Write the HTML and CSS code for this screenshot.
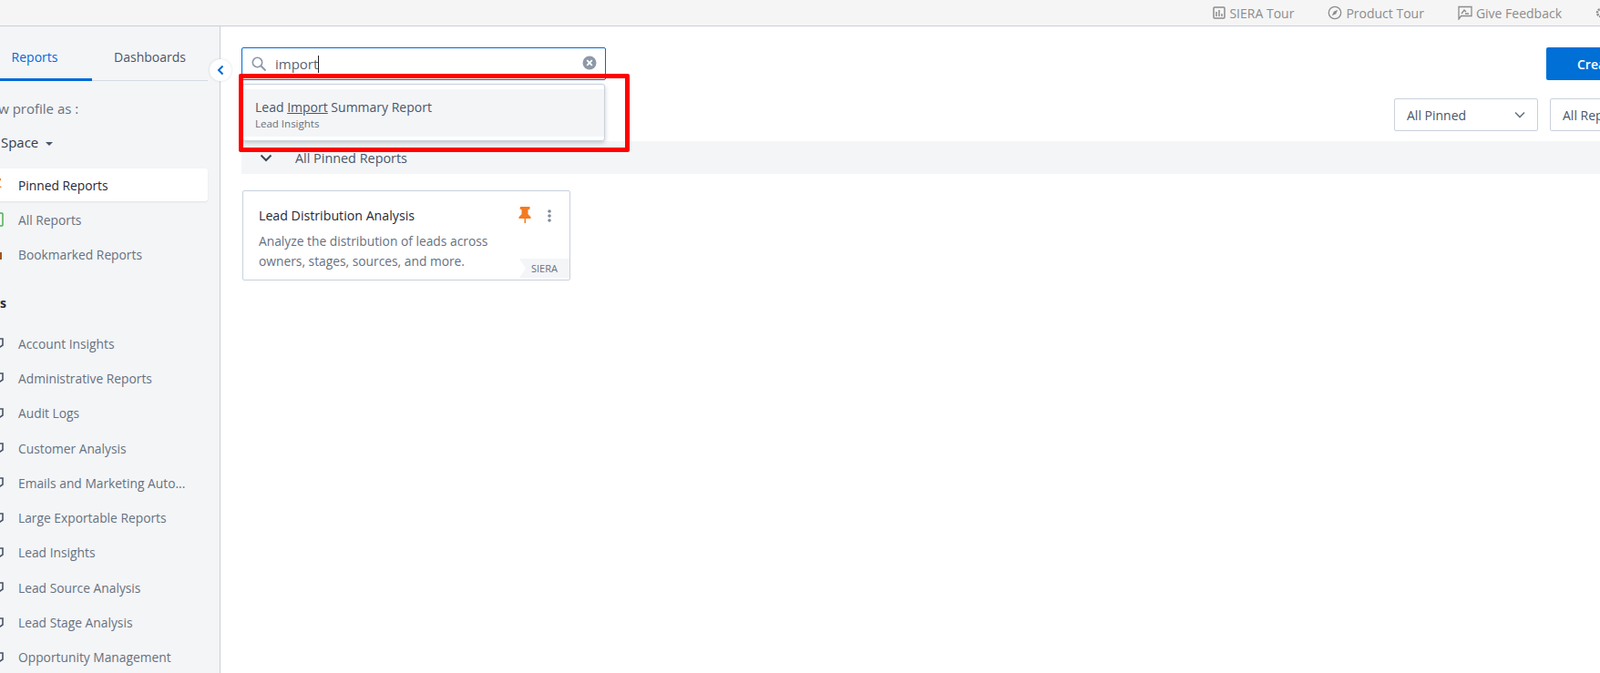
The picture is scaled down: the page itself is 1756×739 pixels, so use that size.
FILE: index.html
```html
<!DOCTYPE html>
<html lang="en">
<head>
    <meta charset="UTF-8">
    <title>Reports</title>
    <link rel="stylesheet" href="styles.css">
</head>
<body>
    <div class="topbar">
        <a class="top-link">
            <svg width="14" height="14" viewBox="0 0 14 14"><rect x="1" y="1" width="12" height="12" rx="1" fill="none" stroke="#8c8c8c" stroke-width="1.5"/><path d="M4 6v5M7 4v7M10 8v3" stroke="#8c8c8c" stroke-width="1.5"/></svg>
            SIERA Tour
        </a>
        <a class="top-link">
            <svg width="16" height="16" viewBox="0 0 16 16"><circle cx="8" cy="8" r="6.7" fill="none" stroke="#8c8c8c" stroke-width="1.3"/><path d="M11.2 4.8 9.2 9.2 4.8 11.2 6.8 6.8z" fill="#8c8c8c"/></svg>
            Product Tour
        </a>
        <a class="top-link">
            <svg width="16" height="16" viewBox="0 0 16 16"><path d="M1 1.500h14v10H3.500L1 15z" fill="none" stroke="#8c8c8c" stroke-width="1.3"/><path d="M4 9l3-4 2 2M8 9h4" fill="none" stroke="#8c8c8c" stroke-width="1.3"/></svg>
            Give Feedback
        </a>
        <a class="top-link top-cut">
            <svg width="12" height="12" viewBox="0 0 12 12"><circle cx="6" cy="6" r="4" fill="none" stroke="#8c8c8c" stroke-width="2.5" stroke-dasharray="2 1"/></svg>
        </a>
    </div>

    <div class="layout">
        <aside class="sidebar">
            <div class="tabs">
                <div class="tab tab-active">Reports</div>
                <div class="tab">Dashboards</div>
            </div>
            <button class="collapse">
                <svg width="10" height="12" viewBox="0 0 10 12"><path d="M7.500 1.500 3 6l4.500 4.500" fill="none" stroke="#0069d9" stroke-width="2"/></svg>
            </button>
            <div class="side-label">View profile as :</div>
            <div class="side-space">My Space <span class="caret"></span></div>

            <ul class="side-menu">
                <li class="side-item side-item-active">
                    <svg class="side-icon" width="14" height="16" viewBox="0 0 14 16"><path d="M3 1h8v2l-2 1v4l3 3H2l3-3V4L3 3zM7 11v5" fill="#f47b20"/></svg>
                    Pinned Reports
                </li>
                <li class="side-item">
                    <svg class="side-icon" width="14" height="16" viewBox="0 0 14 16"><rect x="1" y="1" width="12" height="14" rx="1" fill="none" stroke="#4caf50" stroke-width="1.5"/></svg>
                    All Reports
                </li>
                <li class="side-item">
                    <svg class="side-icon" width="14" height="16" viewBox="0 0 14 16"><path d="M2 6h10v8H2z" fill="#a0521e"/><path d="M5 6V3h4v3" fill="none" stroke="#a0521e" stroke-width="1.5"/></svg>
                    Bookmarked Reports
                </li>
            </ul>

            <div class="side-heading">Folders</div>

            <ul class="side-menu">
                <li class="side-item folder">
                    <svg class="side-icon" width="14" height="14" viewBox="0 0 14 14"><path d="M1 2h12v7l-6 4-6-4z" fill="none" stroke="#4a5568" stroke-width="1.6"/></svg>
                    Account Insights
                </li>
                <li class="side-item folder">
                    <svg class="side-icon" width="14" height="14" viewBox="0 0 14 14"><path d="M1 2h12v7l-6 4-6-4z" fill="none" stroke="#4a5568" stroke-width="1.6"/></svg>
                    Administrative Reports
                </li>
                <li class="side-item folder">
                    <svg class="side-icon" width="14" height="14" viewBox="0 0 14 14"><path d="M1 2h12v7l-6 4-6-4z" fill="none" stroke="#4a5568" stroke-width="1.6"/></svg>
                    Audit Logs
                </li>
                <li class="side-item folder">
                    <svg class="side-icon" width="14" height="14" viewBox="0 0 14 14"><path d="M1 2h12v7l-6 4-6-4z" fill="none" stroke="#4a5568" stroke-width="1.6"/></svg>
                    Customer Analysis
                </li>
                <li class="side-item folder">
                    <svg class="side-icon" width="14" height="14" viewBox="0 0 14 14"><path d="M1 2h12v7l-6 4-6-4z" fill="none" stroke="#4a5568" stroke-width="1.6"/></svg>
                    Emails and Marketing Auto...
                </li>
                <li class="side-item folder">
                    <svg class="side-icon" width="14" height="14" viewBox="0 0 14 14"><path d="M1 2h12v7l-6 4-6-4z" fill="none" stroke="#4a5568" stroke-width="1.6"/></svg>
                    Large Exportable Reports
                </li>
                <li class="side-item folder">
                    <svg class="side-icon" width="14" height="14" viewBox="0 0 14 14"><path d="M1 2h12v7l-6 4-6-4z" fill="none" stroke="#4a5568" stroke-width="1.6"/></svg>
                    Lead Insights
                </li>
                <li class="side-item folder">
                    <svg class="side-icon" width="14" height="14" viewBox="0 0 14 14"><path d="M1 2h12v7l-6 4-6-4z" fill="none" stroke="#4a5568" stroke-width="1.6"/></svg>
                    Lead Source Analysis
                </li>
                <li class="side-item folder">
                    <svg class="side-icon" width="14" height="14" viewBox="0 0 14 14"><path d="M1 2h12v7l-6 4-6-4z" fill="none" stroke="#4a5568" stroke-width="1.6"/></svg>
                    Lead Stage Analysis
                </li>
                <li class="side-item folder">
                    <svg class="side-icon" width="14" height="14" viewBox="0 0 14 14"><path d="M1 2h12v7l-6 4-6-4z" fill="none" stroke="#4a5568" stroke-width="1.6"/></svg>
                    Opportunity Management
                </li>
            </ul>
        </aside>

        <main class="content">
            <div class="toolbar">
                <div class="search">
                    <svg width="18" height="18" viewBox="0 0 18 18"><circle cx="7.500" cy="7.500" r="5.200" fill="none" stroke="#8b96a5" stroke-width="1.6"/><path d="M11.500 11.500 16.500 16.500" stroke="#8b96a5" stroke-width="1.8"/></svg>
                    <span class="search-text">import</span>
                    <svg class="search-clear" width="16" height="16" viewBox="0 0 16 16"><circle cx="8" cy="8" r="7.500" fill="#8e99a8"/><path d="M5.200 5.200l5.600 5.600M10.800 5.200l-5.600 5.600" stroke="#fff" stroke-width="1.8"/></svg>
                </div>
                <button class="btn-create">Create Report</button>
            </div>

            <div class="filters">
                <div class="select">All Pinned
                    <svg width="12" height="8" viewBox="0 0 12 8"><path d="M1 1.500l5 5 5-5" fill="none" stroke="#6b7685" stroke-width="1.6"/></svg>
                </div>
                <div class="select select-wide">All Reports</div>
            </div>

            <div class="group-bar">
                <svg width="14" height="9" viewBox="0 0 14 9"><path d="M1.500 1.500 7 7l5.500-5.500" fill="none" stroke="#3b4657" stroke-width="2"/></svg>
                All Pinned Reports
            </div>

            <div class="card">
                <div class="card-head">
                    <div class="card-title">Lead Distribution Analysis</div>
                    <svg class="card-pin" width="14" height="18" viewBox="0 0 14 18"><path d="M2 0h10.500v2.500l-2 .8v5l3 3v1.700H8v5H6.500v-5H.500v-1.700l3-3v-5l-2-.8z" fill="#f47b20"/></svg>
                    <svg class="card-more" width="4" height="14" viewBox="0 0 4 14"><circle cx="2" cy="2" r="1.800" fill="#7f8a99"/><circle cx="2" cy="7" r="1.800" fill="#7f8a99"/><circle cx="2" cy="12" r="1.800" fill="#7f8a99"/></svg>
                </div>
                <p class="card-text">Analyze the distribution of leads across owners, stages, sources, and more.</p>
                <span class="card-tag">SIERA</span>
            </div>

            <div class="suggest">
                <div class="suggest-item">
                    <div class="suggest-title">Lead <u>Import</u> Summary Report</div>
                    <div class="suggest-sub">Lead Insights</div>
                </div>
            </div>
            <div class="highlight"></div>
        </main>
    </div>
</body>
</html>
```
FILE: styles.css
```css
* {
    box-sizing: border-box;
}
html, body {
    height: 100%;
}
body {
    margin: 0;
    font-family: "Open Sans", "Noto Sans", sans-serif;
    font-size: 14px;
    color: #4a5568;
    background-color: #fff;
    overflow: hidden;
}
.topbar {
    height: 29px;
    display: flex;
    justify-content: flex-end;
    align-items: center;
    gap: 37px;
    background-color: #f5f5f5;
    border-bottom: 1px solid #c9d1dc;
    margin-right: -7px;
}
.top-link {
    display: flex;
    align-items: center;
    gap: 4px;
    color: #8c8c8c;
    font-size: 14px;
}
.layout {
    display: flex;
    height: 710px;
}
.sidebar {
    position: relative;
    flex: 0 0 242px;
    min-width: 0;
    background-color: #f4f5f7;
    border-right: 1px solid #c9d1dc;
    padding-right: 13px;
}
.tabs {
    display: flex;
    height: 60px;
    border-bottom: 1px solid #d5dbe3;
}
.tab {
    padding: 24px 0 0;
    line-height: 19px;
    color: #4a5568;
    width: 127px;
    text-align: center;
}
.tab-active {
    width: 101px;
    padding-right: 25px;
    color: #0069d9;
    border-bottom: 3px solid #0069d9;
    height: 60px;
}
.collapse {
    position: absolute;
    top: 36px;
    left: 230px;
    width: 24px;
    height: 24px;
    border: none;
    border-radius: 50%;
    background-color: #fff;
    box-shadow: 0 0 3px rgba(0, 0, 0, 0.15);
    padding: 0;
    display: flex;
    align-items: center;
    justify-content: center;
}
.side-label {
    margin: 20px 0 0 -23px;
    font-size: 15px;
    line-height: 20px;
    color: #66717f;
}
.side-space {
    margin: 17px 0 0 -24px;
    font-size: 15px;
    line-height: 20px;
    color: #333c49;
}
.caret {
    display: inline-block;
    margin-left: 4px;
    vertical-align: middle;
    border-left: 4px solid transparent;
    border-right: 4px solid transparent;
    border-top: 4px solid #4a5568;
}
.side-menu {
    list-style: none;
    margin: 0;
    padding: 0;
}
.side-menu:first-of-type {
    margin-top: 19px;
}
.side-item {
    display: flex;
    align-items: center;
    gap: 16px;
    height: 38px;
    margin-left: -10px;
    font-size: 13.800px;
    color: #66717f;
    white-space: nowrap;
}
.side-item-active {
    height: 36px;
    margin-bottom: 1px;
    color: #1f2937;
    background-color: #fff;
    border-radius: 0 3px 3px 0;
    box-shadow: 0 1px 2px rgba(0, 0, 0, 0.08);
}
.folder {
    height: 38.300px;
}
.side-heading {
    margin: 25px 0 15px -44px;
    font-weight: 700;
    line-height: 20px;
    color: #1f2937;
}
.content {
    position: relative;
    flex: 1;
    min-width: 0;
    padding: 23px 0 0 23px;
}
.toolbar {
    display: flex;
    justify-content: space-between;
    height: 36px;
}
.search {
    display: flex;
    align-items: center;
    width: 400px;
    height: 36px;
    padding: 0 9px;
    border: 1px solid #0069d9;
    border-radius: 2px;
    gap: 9px;
}
.search-text {
    flex: 1;
    font-size: 15px;
    color: #5a6473;
}
.search-text::after {
    content: "";
    display: inline-block;
    width: 1px;
    height: 19px;
    background-color: #222;
    vertical-align: -4px;
}
.search-clear {
    margin-top: -2px;
}
.btn-create {
    flex: 0 0 160px;
    margin-right: -101px;
    height: 36px;
    border: none;
    border-radius: 2px;
    background-color: #006fd6;
    color: #fff;
    font-family: inherit;
    font-size: 14px;
    font-weight: 600;
    text-align: left;
    padding-left: 34px;
}
.filters {
    display: flex;
    justify-content: flex-end;
    gap: 13px;
    margin: 20px -200px 0 0;
}
.select {
    display: flex;
    align-items: center;
    justify-content: space-between;
    width: 158px;
    height: 36px;
    padding: 0 13px;
    border: 1px solid #c9d1dc;
    border-radius: 2px;
    background-color: #fff;
    color: #4a5568;
}
.select-wide {
    width: 255px;
}
.group-bar {
    display: flex;
    align-items: center;
    gap: 25px;
    height: 36px;
    margin-top: 11px;
    padding-left: 20px;
    font-size: 14.400px;
    background-color: #f4f5f7;
    color: #4a5568;
}
.card {
    position: relative;
    width: 360px;
    height: 99px;
    margin: 18px 0 0 1px;
    padding: 17px 17px;
    border: 1px solid #c9d1dc;
    border-radius: 2px;
    background-color: #fff;
}
.card-head {
    display: flex;
    align-items: flex-start;
}
.card-title {
    flex: 1;
    font-size: 14.200px;
    font-weight: 500;
    line-height: 20px;
    color: #1f2937;
}
.card-pin {
    margin-right: 3px;
}
.card-more {
    margin: 3px 3px 0 15px;
}
.card-text {
    margin: 7px 0 0;
    width: 270px;
    font-size: 13.800px;
    line-height: 22px;
    color: #66717f;
}
.card-tag {
    position: absolute;
    right: 0;
    bottom: 2px;
    width: 55px;
    height: 21px;
    padding-left: 13px;
    font-size: 11px;
    line-height: 21px;
    color: #66717f;
    background-color: #f4f5f7;
    clip-path: polygon(0 0, 100% 0, 100% 100%, 0 100%, 7px 50%);
}
.suggest {
    position: absolute;
    top: 63px;
    left: 24px;
    width: 398px;
    padding: 5px 0 4px;
    background-color: #fff;
    border: 1px solid #c9d1dc;
    border-radius: 3px;
    box-shadow: 0 2px 5px rgba(0, 0, 0, 0.2);
}
.suggest-item {
    padding: 10px 13px 6px;
    background-color: #f4f5f7;
}
.suggest-title {
    line-height: 20px;
    color: #4a5568;
}
.suggest-sub {
    font-size: 11.500px;
    line-height: 16px;
    color: #66717f;
}
.highlight {
    position: absolute;
    top: 52px;
    left: 20px;
    width: 429px;
    height: 86px;
    border: 5px solid #f00;
    border-radius: 2px;
}
```
